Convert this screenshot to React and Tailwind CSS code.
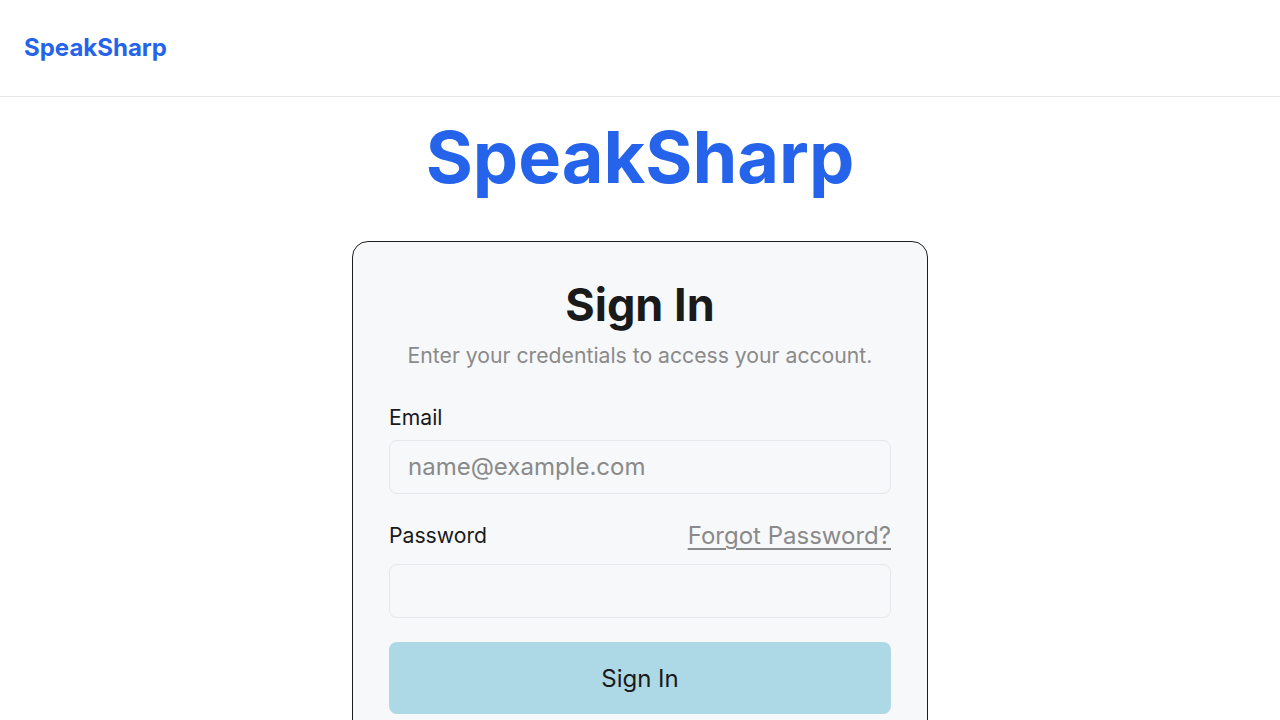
export default function App() {
  return (
    <div className="min-h-screen bg-white" style={{ fontFamily: 'Inter, "Noto Sans", sans-serif' }}>
      <header className="h-[97px] border-b border-[#e5e7eb] flex items-center px-6">
        <span className="text-2xl font-bold text-[#2563eb]">SpeakSharp</span>
      </header>
      <main className="flex flex-col items-center">
        <h1 className="mt-6 text-7xl leading-none font-bold text-[#2563eb]">SpeakSharp</h1>
        <div className="mt-12 w-[576px] rounded-2xl border border-[#1f1f1f] bg-[#f7f8fa] p-9">
          <h2 className="mt-1 text-[45px] leading-none font-bold text-[#1a1a1a] text-center">Sign In</h2>
          <p className="mt-[14px] text-[21.2px] leading-7 text-[#8a8a8a] text-center">Enter your credentials to access your account.</p>
          <label className="block mt-[34px] text-[21.2px] leading-7 text-[#1a1a1a]">Email</label>
          <div className="mt-[9px] h-[54px] rounded-lg border border-[#e5e7eb] bg-[#f7f8fa] flex items-center px-[18px] text-2xl text-[#8a8a8a]">
            name@example.com
          </div>
          <div className="mt-[26px] flex items-center justify-between h-8">
            <span className="text-[21.2px] text-[#1a1a1a]">Password</span>
            <span className="text-2xl text-[#8a8a8a] underline underline-offset-4 decoration-2">Forgot Password?</span>
          </div>
          <div className="mt-3 h-[54px] rounded-lg border border-[#e5e7eb] bg-[#f7f8fa]"></div>
          <div className="mt-6 h-[72px] rounded-lg bg-[#add8e6] flex items-center justify-center text-2xl text-[#1a1a1a] pt-0.5">
            Sign In
          </div>
          <div className="h-10"></div>
        </div>
      </main>
    </div>
  );
}
